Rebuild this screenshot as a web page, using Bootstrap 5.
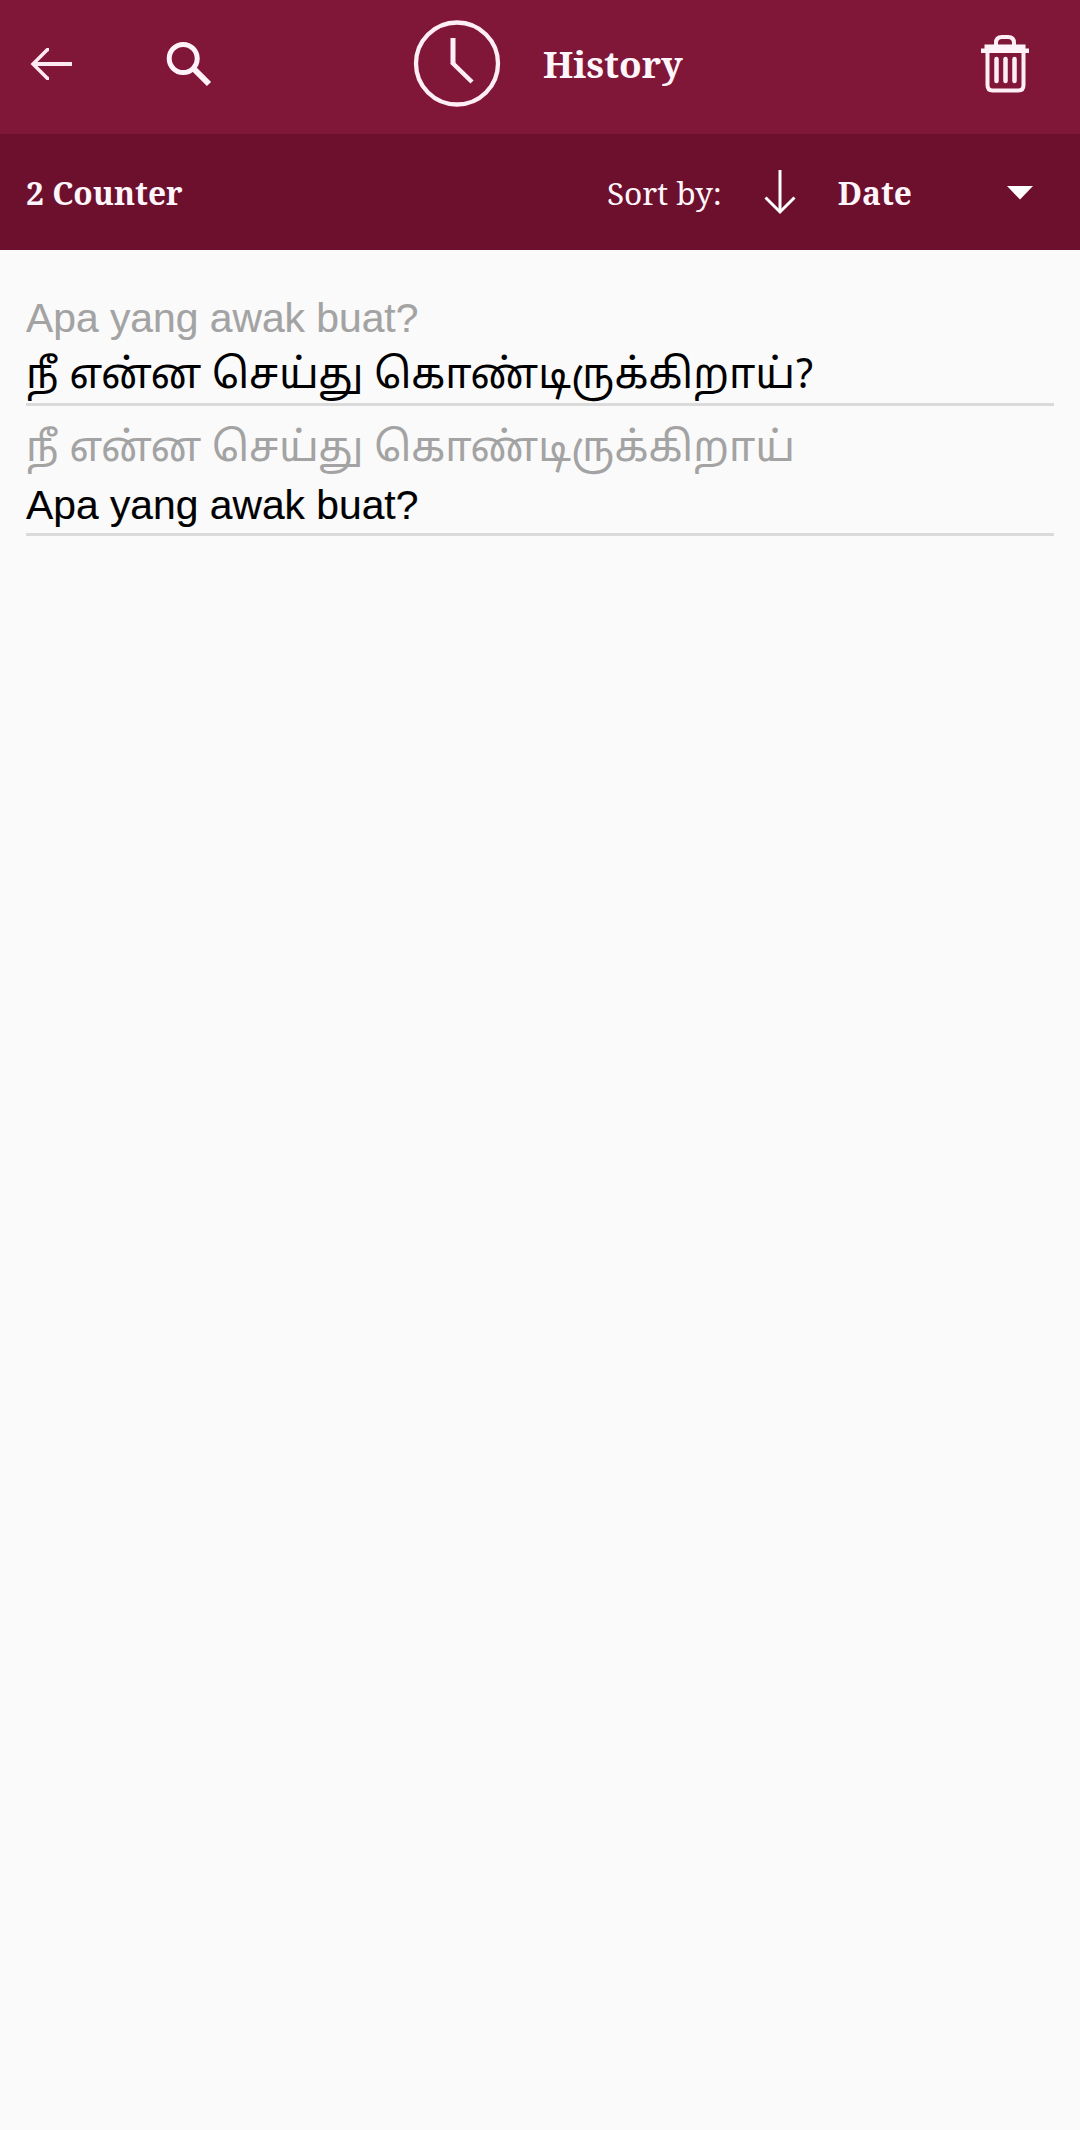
<!DOCTYPE html>
<html lang="en">
<head>
<meta charset="utf-8">
<meta name="viewport" content="width=device-width, initial-scale=1">
<title>History</title>
<link rel="stylesheet" href="https://cdn.jsdelivr.net/npm/bootstrap@5.3.0/dist/css/bootstrap.min.css">
<style>
  body { background: #fafafa; min-height: 2130px; }
  .serif-face { font-family: "Noto Serif", "Liberation Serif", serif; color: #fff6fb; white-space: nowrap; }
  .top-bar { background: #801638; height: 134px; padding: 0 51px 7px 30px; }
  .sort-bar { background: #6d102e; height: 116px; padding: 2px 47px 0 26px; font-size: 31.7px; }
  .bar-icon { display: block; flex: none; }
  .btn-plain { padding: 0; border: 0; }
  .search-btn { margin-left: 93px; }
  .screen-title { margin-left: 201px; }
  .title-text { font-size: 37px; line-height: 50px; margin-left: 42px; padding-top: 1px; }
  .sort-text { letter-spacing: -.1px; }
  .sort-arrow { margin: 0 42px 0 42px; }
  .sort-caret { margin-left: 95px; }
  .history-list { padding: 43px 26px 0; }
  .entry { border-bottom: 3px solid #dadada; white-space: nowrap; color: #000; }
  .latin { font: 40.8px/50px "Liberation Sans", Arial, sans-serif; -webkit-text-stroke: .15px currentColor; }
  .tamil { font: 41.2px/51px "Noto Sans Tamil", "Noto Sans", sans-serif; padding-top: 9px; }
  .entry-ta { padding: 10px 0 3px; }
  .entry-ta .latin { margin-top: 4px; }
  .faded { color: #a3a3a3; }
</style>
</head>
<body>
<header class="serif-face">
  <nav class="top-bar d-flex align-items-center">
    <button class="btn btn-plain" aria-label="Back">
      <svg class="bar-icon" width="43" height="32" viewBox="0 0 43 32" fill="none" stroke="#ffeaf3" stroke-width="4"><path d="M19 1.500H17.500L3 16l14.500 14.500H19" stroke-width="3.500"/><path d="M42 16H3"/></svg>
    </button>
    <button class="btn btn-plain search-btn" aria-label="Search">
      <svg class="bar-icon" width="46" height="46" viewBox="0 0 46 46" fill="none" stroke="#fff3f9"><circle cx="17.200" cy="17.500" r="14" stroke-width="5"/><path d="M28.500 28.500L43 43" stroke-width="6"/></svg>
    </button>
    <div class="screen-title d-flex align-items-center">
      <svg class="bar-icon" width="88" height="88" viewBox="0 0 88 88" fill="none" stroke="#ffeef6"><circle cx="44" cy="43.500" r="41" stroke-width="4.300"/><path d="M40 18v26" stroke-width="5"/><path d="M39 42.500l20 19.500" stroke-width="4.500"/></svg>
      <h1 class="title-text fw-bold mb-0">History</h1>
    </div>
    <button class="btn btn-plain ms-auto" aria-label="Delete">
      <svg class="bar-icon" width="48" height="58" viewBox="0 0 48 58" fill="none" stroke="#ffeef6"><path d="M15 11V8q0-6 6-6h6q6 0 6 6v3" stroke-width="4"/><path d="M3.500 9.500h41v4H48v4.500H0v-4.500h3.500z" fill="#fff3f9" stroke="none"/><path d="M6.500 15v35q0 5.500 5 5.500h26q5 0 5-5.500V15" stroke-width="4"/><path d="M15.500 24v22M24.500 24v22M33.500 24v22" stroke-width="4.500" stroke-linecap="round"/></svg>
    </button>
  </nav>
  <div class="sort-bar d-flex align-items-center">
    <span class="count-text fw-bold">2 Counter</span>
    <span class="sort-text ms-auto">Sort by:</span>
    <svg class="bar-icon sort-arrow" width="32" height="46" viewBox="0 0 32 46" fill="none" stroke="#fff"><path d="M16 0v42" stroke-width="3"/><path d="M1.500 27.500L16 42l14.500-14.500" stroke-width="3"/></svg>
    <span class="date-text fw-bold">Date</span>
    <svg class="bar-icon sort-caret" width="26" height="14" viewBox="0 0 26 14"><path d="M0 0h26L13 13.500z" fill="#fff"/></svg>
  </div>
</header>
<main class="history-list">
  <article class="entry">
    <div class="latin faded">Apa yang awak buat?</div>
    <div class="tamil" lang="ta">நீ என்ன செய்து கொண்டிருக்கிறாய்?</div>
  </article>
  <article class="entry entry-ta">
    <div class="tamil faded" lang="ta">நீ என்ன செய்து கொண்டிருக்கிறாய்</div>
    <div class="latin">Apa yang awak buat?</div>
  </article>
</main>
<script src="https://cdn.jsdelivr.net/npm/bootstrap@5.3.0/dist/js/bootstrap.bundle.min.js"></script>
</body>
</html>
